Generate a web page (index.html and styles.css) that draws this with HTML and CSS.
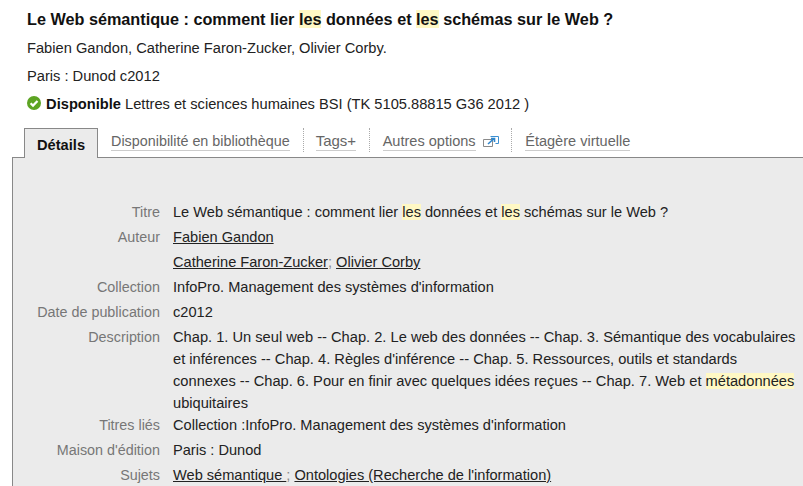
FILE: index.html
```html
<!DOCTYPE html>
<html lang="fr">
<head>
<meta charset="utf-8">
<title>Le Web sémantique</title>
<link rel="stylesheet" href="styles.css">
</head>
<body>
<div class="record">
  <h1 class="title">Le Web sémantique : comment lier <mark>les</mark> données et <mark>les</mark> schémas sur le Web ?</h1>
  <p class="line first">Fabien Gandon, Catherine Faron-Zucker, Olivier Corby.</p>
  <p class="line">Paris : Dunod c2012</p>
  <p class="line avail">
    <svg class="check" width="14" height="14" viewBox="0 0 14 14"><circle cx="7" cy="7" r="7" fill="#5da423"/><path d="M3.6 7.2 6 9.6 10.5 4.9" fill="none" stroke="#fff" stroke-width="2.2"/></svg>
    <strong>Disponible</strong> Lettres et sciences humaines BSI (TK 5105.88815 G36 2012 )
  </p>
</div>
<div class="tabs">
  <span class="tab active">Détails</span>
  <span class="tab tab-library"><span class="tlabel">Disponibilité en bibliothèque</span></span>
  <span class="tab tab-tags"><span class="tlabel">Tags+</span></span>
  <span class="tab tab-options"><span class="tlabel">Autres options</span>
    <svg class="ext" width="16" height="12" viewBox="0 0 16 12"><path d="M.5 4.5h9v7h-9z" fill="#fff" stroke="#8a8a8a"/><path d="M7.5 1.5h8v7h-3" fill="#fff" stroke="#3d8fd1"/><path d="M5 9 10.5 4M8 3.5h3.5V7" fill="none" stroke="#2f86cc" stroke-width="1.6"/></svg>
  </span>
  <span class="tab last"><span class="tlabel">Étagère virtuelle</span></span>
</div>
<div class="panel">
  <dl class="details">
    <dt>Titre</dt><dd>Le Web sémantique : comment lier <mark>les</mark> données et <mark>les</mark> schémas sur le Web ?</dd>
    <dt>Auteur</dt><dd><a href="#">Fabien Gandon</a></dd>
    <dt></dt><dd><a href="#">Catherine Faron-Zucker</a><span class="sep">;</span> <a href="#">Olivier Corby</a></dd>
    <dt>Collection</dt><dd>InfoPro. Management des systèmes d'information</dd>
    <dt>Date de publication</dt><dd>c2012</dd>
    <dt class="tight">Description</dt><dd class="tight">Chap. 1. Un seul web -- Chap. 2. Le web des données -- Chap. 3. Sémantique des vocabulaires et inférences -- Chap. 4. Règles d'inférence -- Chap. 5. Ressources, outils et standards connexes -- Chap. 6. Pour en finir avec quelques idées reçues -- Chap. 7. Web et <mark>métadonnées</mark> ubiquitaires</dd>
    <dt>Titres liés</dt><dd>Collection :InfoPro. Management des systèmes d'information</dd>
    <dt>Maison d'édition</dt><dd>Paris : Dunod</dd>
    <dt>Sujets</dt><dd><a href="#">Web sémantique </a><span class="sep">;</span> <a href="#">Ontologies (Recherche de l'information)</a></dd>
  </dl>
</div>
</body>
</html>
```

FILE: styles.css
```css
html, body {
  margin: 0;
  padding: 0;
  height: 486px;
  overflow: hidden;
  background: #fff;
}
body {
  font-family: "Liberation Sans", Arial, sans-serif;
  font-size: 14.67px;
  color: #222;
}
mark {
  background: #fff8c4;
  color: inherit;
}
.record {
  padding: 10px 0 0 27px;
}
.title {
  margin: 0;
  font-size: 16.23px;
  line-height: 18px;
  font-weight: bold;
  color: #111;
}
.line {
  margin: 0;
  line-height: 18px;
  padding-top: 10px;
}
.line.first {
  padding-top: 11px;
}
.avail {
  white-space: nowrap;
}
.avail strong {
  color: #111;
}
.check {
  vertical-align: -1px;
  margin-right: 1px;
}
.tabs {
  display: flex;
  align-items: flex-end;
  height: 30px;
  margin-top: 14px;
  padding-left: 24px;
  position: relative;
  z-index: 1;
}
.tab {
  display: block;
  height: 24px;
  padding: 0 12px 0 13px;
  margin-bottom: 5px;
  border-right: 1px dotted #aaa;
  color: #666;
  font-size: 14.55px;
  line-height: 24px;
  white-space: nowrap;
}
.tab-library {
  font-size: 14.35px;
  padding-right: 13px;
}
.tab-tags {
  font-size: 15px;
  padding: 0 12.5px 0 12px;
}
.tab-options {
  padding-right: 12.5px;
}
.tab.last {
  border-right: 0;
}
.tlabel {
  display: inline-block;
  line-height: 26px;
  height: 22px;
  border-bottom: 1px solid #ccc;
}
.ext {
  vertical-align: -1px;
  margin-left: 3px;
}
.tab.active {
  height: 29px;
  margin-bottom: -1px;
  padding: 0 12px;
  border: 1px solid #888;
  border-bottom: 0;
  background: #ebebeb;
  color: #111;
  font-size: 14.67px;
  font-weight: bold;
  line-height: 33px;
}
.panel {
  margin-left: 12px;
  border-top: 1px solid #888;
  border-left: 1px solid #888;
  background: #ebebeb;
  height: 329px;
  box-sizing: border-box;
  padding: 43px 4px 0 0;
}
.details {
  margin: 0;
  display: grid;
  grid-template-columns: 147px 1fr;
  column-gap: 13px;
  line-height: 22px;
}
.details dt {
  text-align: right;
  color: #777;
  font-size: 14.35px;
  margin-bottom: 3px;
}
.details dd {
  margin: 0 0 3px;
  color: #222;
  font-size: 14.6px;
}
.details dd.tight {
  margin-bottom: 0;
  font-size: 14.66px;
}
.details dt.tight {
  margin-bottom: 0;
}
.details a {
  color: #222;
  text-decoration: underline;
}
.sep {
  color: #888;
}
```
